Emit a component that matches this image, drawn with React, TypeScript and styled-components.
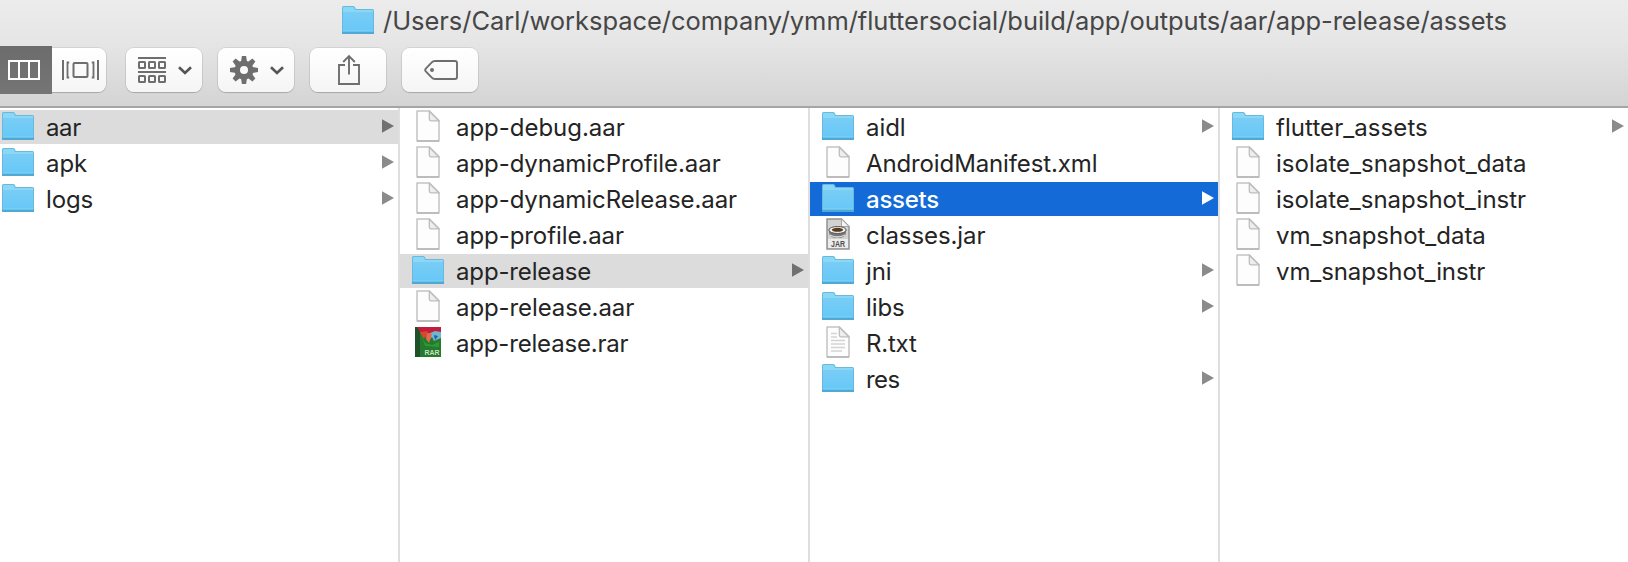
import React from 'react';
import styled, { createGlobalStyle, css } from 'styled-components';

const GlobalStyle = createGlobalStyle`
  *, *::before, *::after { box-sizing: border-box; }
  html, body { margin: 0; padding: 0; overflow: hidden; background: #fff; }
  body { font-family: Inter, "Liberation Sans", sans-serif; }
`;

const Window = styled.main`
  display: flex;
  flex-direction: column;
  width: 1628px;
  height: 562px;
  overflow: hidden;
  background: #fff;
`;

const Header = styled.header`
  flex: none;
  height: 108px;
  background: linear-gradient(#ececec 0, #e6e6e6 38%, #d4d4d4 100%);
  border-bottom: 2px solid #a5a5a5;
`;

const TitleBar = styled.div`
  display: flex;
  align-items: flex-start;
  gap: 9px;
  height: 46px;
  padding: 5px 0 0 342px;
`;

const Title = styled.h1`
  margin: 0;
  font-size: 25.5px;
  font-weight: 400;
  line-height: 32px;
  letter-spacing: -0.045px;
  white-space: nowrap;
  color: #464646;
`;

const Toolbar = styled.div`
  display: flex;
  align-items: center;
  gap: 16px;
  height: 48px;
`;

const Segments = styled.div`
  display: flex;
  align-items: center;
  margin-right: 4px;
`;

const buttonFace = css`
  display: flex;
  align-items: center;
  justify-content: center;
  height: 44px;
  padding: 0 0 0 2px;
  border: 0;
  background: linear-gradient(#ffffff, #f5f5f5);
  box-shadow: 0 1px 1px rgba(0, 0, 0, 0.16), 0 0 0 1px rgba(0, 0, 0, 0.07);
  color: #6e6e6e;
`;

const Segment = styled.button<{ $active?: boolean }>`
  ${buttonFace}
  width: 54px;
  border-radius: 0 8px 8px 0;
  ${({ $active }) =>
    $active &&
    css`
      z-index: 1;
      width: 52px;
      height: 48px;
      padding: 0 4px 0 0;
      border-radius: 0;
      box-shadow: none;
      background: linear-gradient(#6c6c6c, #757575);
      color: #fff;
    `}
`;

const ToolButton = styled.button`
  ${buttonFace}
  gap: 12px;
  width: 76px;
  border-radius: 8px;
`;

const Columns = styled.div`
  flex: 1;
  display: flex;
  margin-left: -10px;
`;

const Column = styled.ul`
  flex: none;
  display: flex;
  flex-direction: column;
  gap: 2px;
  width: 410px;
  margin: 0;
  padding: 2px 0 0;
  list-style: none;
  border-right: 2px solid #dfdfdf;
`;

type Mark = 'path' | 'selected';

const markColour = { path: '#dcdcdc', selected: '#146bd8' };

const Row = styled.li<{ $mark?: Mark }>`
  display: flex;
  align-items: flex-start;
  height: 34px;
  padding: 0 4px 0 12px;
  background: ${({ $mark }) => ($mark ? markColour[$mark] : 'transparent')};
  color: ${({ $mark }) => ($mark === 'selected' ? '#fff' : '#242424')};
  font-weight: ${({ $mark }) => ($mark === 'selected' ? 500 : 400)};
`;

const IconSlot = styled.span`
  display: flex;
  align-items: center;
  justify-content: center;
  flex: none;
  width: 32px;
  height: 32px;
  margin-right: 12px;
`;

const ArrowSlot = styled.span`
  display: flex;
  align-items: center;
  height: 32px;
`;

const Name = styled.span<{ $tracking: number }>`
  flex: 1;
  padding-top: 1px;
  font-size: 24px;
  line-height: 34px;
  letter-spacing: ${({ $tracking }) => $tracking}px;
  white-space: nowrap;
`;

const Drawing = styled.svg`
  display: block;
  flex: none;
`;

const FolderIcon = () => (
  <Drawing width="32" height="30" viewBox="0 0 32 30">
    <defs>
      <linearGradient id="folder" x1="0" y1="0" x2="0" y2="1">
        <stop offset="0" stopColor="#79cdf5" />
        <stop offset="1" stopColor="#68c8f8" />
      </linearGradient>
    </defs>
    <path d="M0 29V2.5Q0 1 1.5 1H11Q12.4 1 13 2.3L13.7 4H30.5Q32 4 32 5.5V29Z" fill="#69b9df" />
    <path d="M1 4V2.6Q1 2 2 2H11Q11.7 2 12.1 3L13 5H31V7H1Z" fill="#8bd7f6" />
    <path d="M1 7H31V26H1Z" fill="url(#folder)" />
    <path d="M0 26.5H32V28Q32 29 31 29H1Q0 29 0 28Z" fill="#4fa9d4" />
    <path d="M1 26H31" stroke="#7ed5f9" />
  </Drawing>
);

const Page = ({ children }: { children?: React.ReactNode }) => (
  <Drawing width="24" height="32" viewBox="0 0 24 32">
    <path d="M1 1H13.5L23 10.5V31H1Z" fill="#fdfdfd" stroke="#c4c4c4" strokeWidth="1.5" strokeLinejoin="round" />
    <path d="M1 31H23" stroke="#b5b5b5" strokeWidth="1.5" />
    <path d="M13.3 1.3V9Q13.3 10.8 15 10.8H22.7Z" fill="#eeeeee" stroke="#bdbdbd" strokeWidth="1.3" />
    {children}
  </Drawing>
);

const TextPage = () => (
  <Page>
    <path d="M5 7.5H11M5 11H11M5 14.5H19M5 18H19M5 21.5H19M5 25H16" stroke="#d4d4d4" strokeWidth="1.3" />
  </Page>
);

const JarIcon = () => (
  <Drawing width="24" height="32" viewBox="0 0 24 32">
    <path d="M1 1H15.5L23 8.5V31H1Z" fill="#d2d2d2" stroke="#939393" strokeWidth="1.5" />
    <path d="M2 21H22V30H2Z" fill="#ececec" />
    <path d="M15.5 1V8.5H23Z" fill="#f5f5f5" stroke="#a5a5a5" />
    <path d="M3 11H20V14Q20 20 11.5 20T3 14Z" fill="#777" />
    <ellipse cx="11.5" cy="12" rx="8.7" ry="3.5" fill="#eee" stroke="#555" />
    <ellipse cx="11.5" cy="11.8" rx="5.7" ry="2" fill="#5b3a1b" />
    <path d="M4 17Q11 21 19 17" fill="none" stroke="#ddd" strokeWidth="1.3" />
    <text x="12" y="28.6" textAnchor="middle" fontFamily="Liberation Sans, sans-serif" fontSize="8.5" fontWeight="700" textLength="14" lengthAdjust="spacingAndGlyphs" fill="#505050">JAR</text>
  </Drawing>
);

const RarIcon = () => (
  <Drawing width="26" height="30" viewBox="0 0 26 30">
    <path d="M0 0H26V30H0Z" fill="#247a2d" />
    <path d="M0 0H5V30H0Z" fill="#1c5225" />
    <path d="M2 0H26V5L14 8L5 5Z" fill="#c01e3c" />
    <path d="M5 5L13 4L11 10L8 11Z" fill="#e0432f" />
    <path d="M13 7L20 4L26 5V11L19 14L17 10L14 13Z" fill="#6fb7cf" />
    <path d="M12 6L17 7L14 16L11 12Z" fill="#ee6548" />
    <path d="M19 8L23 9L20 13Z" fill="#285b9b" />
    <path d="M7 9L10 16L17 18L24 15V20L10 19Z" fill="#2e9938" />
    <text x="17" y="27.5" textAnchor="middle" fontFamily="Liberation Sans, sans-serif" fontSize="8" fontWeight="700" textLength="15" lengthAdjust="spacingAndGlyphs" fill="#c5dfbe">RAR</text>
  </Drawing>
);

const DisclosureArrow = ({ mark }: { mark?: Mark }) => (
  <ArrowSlot>
    <Drawing width="12" height="14" viewBox="0 0 12 14">
      <path d="M0 0.2L12 7L0 13.8Z" fill={mark === 'selected' ? '#fff' : mark === 'path' ? '#717171' : '#8b8b8b'} />
    </Drawing>
  </ArrowSlot>
);

const ColumnsIcon = () => (
  <Drawing width="32" height="20" viewBox="0 0 32 20" fill="none" stroke="currentColor" strokeWidth="2">
    <path d="M1 1H31V19H1ZM11 1V19M21 1V19" />
  </Drawing>
);

const CoverFlowIcon = () => (
  <Drawing width="37" height="20" viewBox="0 0 37 20" fill="none" stroke="currentColor" strokeWidth="2">
    <path d="M1 0V20M36 0V20" />
    <path d="M7.2 2.5H5.5V17.5H7.2M29.8 2.5H31.5V17.5H29.8" strokeWidth="1.8" />
    <rect x="11.5" y="3" width="14" height="14" rx="1" />
  </Drawing>
);

const ArrangeIcon = () => (
  <Drawing width="28" height="26" viewBox="0 0 28 26" fill="none" stroke="currentColor" strokeWidth="2">
    <path d="M0 1H28M0 15H28" />
    {[5, 19].map((y) => [1, 11, 21].map((x) => <rect key={`${x}-${y}`} x={x} y={y} width="6" height="6" rx="0.6" />))}
  </Drawing>
);

const GearIcon = () => (
  <Drawing width="28" height="28" viewBox="-14 -14 28 28" fill="currentColor">
    {[0, 45, 90, 135].map((angle) => (
      <path key={angle} d="M-2.1 -14H2.1L3 -8V8L2.1 14H-2.1L-3 8V-8Z" transform={`rotate(${angle})`} />
    ))}
    <circle r="9.5" />
    <circle r="4" fill="#fafafa" />
  </Drawing>
);

const Chevron = () => (
  <Drawing width="14" height="9" viewBox="0 0 14 9" fill="none" stroke="#555" strokeWidth="2.6">
    <path d="M1 1.2L7 7L13 1.2" />
  </Drawing>
);

const ShareIcon = () => (
  <Drawing width="22" height="32" viewBox="0 0 22 32" fill="none" stroke="currentColor" strokeWidth="1.9">
    <path d="M7 11H1V30H21V11H15M11 20.5V2.5M5.2 8L11 2.2L16.8 8" />
  </Drawing>
);

const TagIcon = () => (
  <Drawing width="34" height="20" viewBox="0 0 34 20" fill="none" stroke="currentColor" strokeWidth="1.9">
    <path d="M11 1H31Q33 1 33 3V17Q33 19 31 19H11Q9 19 7.5 17.3L1.8 11.4Q0.6 10 1.8 8.6L7.5 2.7Q9 1 11 1Z" />
    <circle cx="8" cy="10" r="2" fill="currentColor" stroke="none" />
  </Drawing>
);

const icons = { folder: FolderIcon, file: Page, text: TextPage, jar: JarIcon, rar: RarIcon };

interface Entry {
  name: string;
  kind: keyof typeof icons;
  mark?: Mark;
  tracking?: number;
}

const columns: Entry[][] = [
  [
    { name: 'aar', kind: 'folder', mark: 'path', tracking: -0.4 },
    { name: 'apk', kind: 'folder', tracking: -0.1 },
    { name: 'logs', kind: 'folder', tracking: -0.1 },
  ],
  [
    { name: 'app-debug.aar', kind: 'file', tracking: -0.03 },
    { name: 'app-dynamicProfile.aar', kind: 'file' },
    { name: 'app-dynamicRelease.aar', kind: 'file' },
    { name: 'app-profile.aar', kind: 'file' },
    { name: 'app-release', kind: 'folder', mark: 'path', tracking: -0.14 },
    { name: 'app-release.aar', kind: 'file', tracking: -0.1 },
    { name: 'app-release.rar', kind: 'rar', tracking: -0.18 },
  ],
  [
    { name: 'aidl', kind: 'folder', tracking: -0.05 },
    { name: 'AndroidManifest.xml', kind: 'file', tracking: -0.12 },
    { name: 'assets', kind: 'folder', mark: 'selected', tracking: -0.25 },
    { name: 'classes.jar', kind: 'jar' },
    { name: 'jni', kind: 'folder' },
    { name: 'libs', kind: 'folder', tracking: -0.1 },
    { name: 'R.txt', kind: 'text', tracking: -0.2 },
    { name: 'res', kind: 'folder', tracking: -0.6 },
  ],
  [
    { name: 'flutter_assets', kind: 'folder', tracking: 0.07 },
    { name: 'isolate_snapshot_data', kind: 'file', tracking: 0.05 },
    { name: 'isolate_snapshot_instr', kind: 'file', tracking: 0 },
    { name: 'vm_snapshot_data', kind: 'file', tracking: -0.02 },
    { name: 'vm_snapshot_instr', kind: 'file', tracking: -0.1 },
  ],
];

const FileRow = ({ name, kind, mark, tracking = -0.07 }: Entry) => {
  const Icon = icons[kind];
  return (
    <Row $mark={mark}>
      <IconSlot>
        <Icon />
      </IconSlot>
      <Name $tracking={tracking}>{name}</Name>
      {kind === 'folder' && <DisclosureArrow mark={mark} />}
    </Row>
  );
};

export default function App() {
  return (
    <Window>
      <GlobalStyle />
      <Header>
        <TitleBar>
          <FolderIcon />
          <Title>/Users/Carl/workspace/company/ymm/fluttersocial/build/app/outputs/aar/app-release/assets</Title>
        </TitleBar>
        <Toolbar>
          <Segments>
            <Segment $active aria-label="Columns"><ColumnsIcon /></Segment>
            <Segment aria-label="Cover Flow"><CoverFlowIcon /></Segment>
          </Segments>
          <ToolButton aria-label="Arrange"><ArrangeIcon /><Chevron /></ToolButton>
          <ToolButton aria-label="Action"><GearIcon /><Chevron /></ToolButton>
          <ToolButton aria-label="Share"><ShareIcon /></ToolButton>
          <ToolButton aria-label="Tags"><TagIcon /></ToolButton>
        </Toolbar>
      </Header>
      <Columns>
        {columns.map((entries, index) => (
          <Column key={index}>
            {entries.map((entry) => (
              <FileRow key={entry.name} {...entry} />
            ))}
          </Column>
        ))}
      </Columns>
    </Window>
  );
}
